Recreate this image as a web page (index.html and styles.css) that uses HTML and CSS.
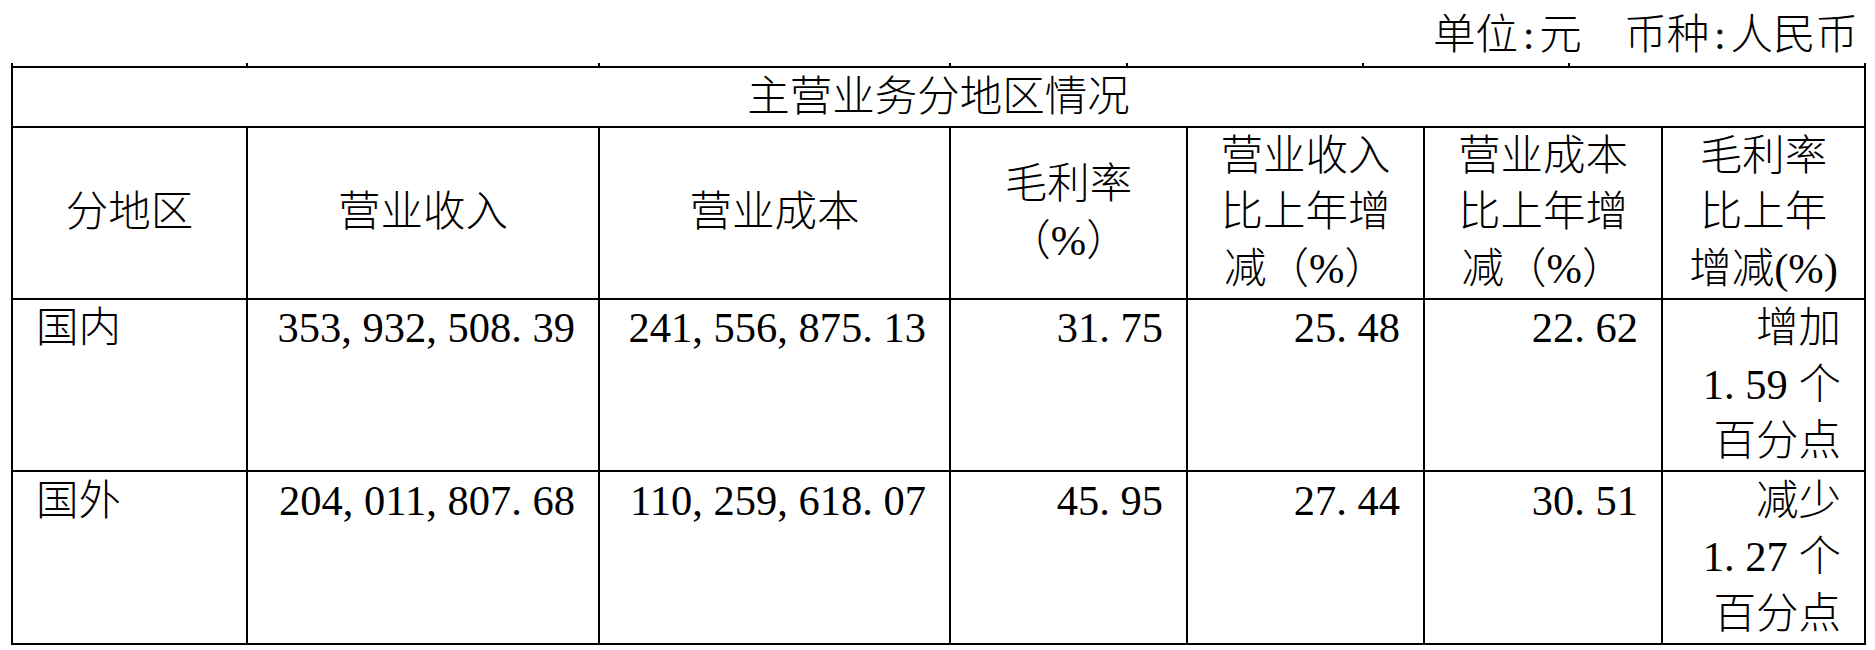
FILE: index.html
```html
<!DOCTYPE html>
<html lang="zh-CN">
<head>
<meta charset="utf-8">
<title>主营业务分地区情况</title>
<link rel="stylesheet" href="styles.css">
</head>
<body>
<div class="unit">单位<span class="colon">:</span>元　币种<span class="colon">:</span>人民币</div>
<div class="ticks">
  <span class="tick w1"></span>
  <span class="tick w2"></span>
  <span class="tick w3"></span>
  <span class="tick w4"></span>
  <span class="tick w5"></span>
  <span class="tick w6"></span>
  <span class="tick w7 last"></span>
</div>
<div class="sheet">
  <div class="cell title">主营业务分地区情况</div>

  <div class="cell head">分地区</div>
  <div class="cell head">营业收入</div>
  <div class="cell head">营业成本</div>
  <div class="cell head">毛利率<br>（%）</div>
  <div class="cell head">营业收入<br>比上年增<br>减（%）</div>
  <div class="cell head">营业成本<br>比上年增<br>减（%）</div>
  <div class="cell head">毛利率<br>比上年<br>增减(%)</div>

  <div class="cell left">国内</div>
  <div class="cell num">353<span class="sep">,</span>932<span class="sep">,</span>508<span class="sep">.</span>39</div>
  <div class="cell num">241<span class="sep">,</span>556<span class="sep">,</span>875<span class="sep">.</span>13</div>
  <div class="cell num">31<span class="sep">.</span>75</div>
  <div class="cell num">25<span class="sep">.</span>48</div>
  <div class="cell num">22<span class="sep">.</span>62</div>
  <div class="cell num">增加<br>1<span class="sep">.</span>59 个<br>百分点</div>

  <div class="cell left">国外</div>
  <div class="cell num">204<span class="sep">,</span>011<span class="sep">,</span>807<span class="sep">.</span>68</div>
  <div class="cell num">110<span class="sep">,</span>259<span class="sep">,</span>618<span class="sep">.</span>07</div>
  <div class="cell num">45<span class="sep">.</span>95</div>
  <div class="cell num">27<span class="sep">.</span>44</div>
  <div class="cell num">30<span class="sep">.</span>51</div>
  <div class="cell num">减少<br>1<span class="sep">.</span>27 个<br>百分点</div>
</div>
</body>
</html>
```

FILE: styles.css
```css
html, body {
  margin: 0;
  padding: 0;
  background: #ffffff;
}

body {
  width: 1875px;
  height: 650px;
  overflow: hidden;
  color: #000000;
  font-family: "Liberation Serif", "Noto Sans CJK SC", serif;
  font-size: 42.5px;
  font-weight: 300;
  line-height: 56.5px;
}

.unit {
  margin-top: 7px;
  height: 56px;
  line-height: 56px;
  padding-right: 17px;
  text-align: right;
  white-space: pre;
}

.colon {
  display: inline-block;
  width: 0.5em;
  text-align: center;
}

.ticks {
  display: flex;
  margin-left: 11px;
  height: 3px;
}

.tick {
  box-sizing: border-box;
  height: 3px;
  border-left: 2px solid #000;
}

.tick.last {
  border-right: 2px solid #000;
}

.w1 { width: 235px; }
.w2 { width: 352px; }
.w3 { width: 351px; }
.w4 { width: 177px; }
.w5 { width: 236px; }
.w6 { width: 206px; }
.w7 { width: 298px; }

.sheet {
  display: grid;
  grid-template-columns: 235px 352px 351px 237px 237px 238px 203px;
  width: 1853px;
  margin-left: 11px;
  border-left: 2px solid #000;
  border-top: 2px solid #000;
}

.cell {
  box-sizing: border-box;
  border-right: 2px solid #000;
  border-bottom: 2px solid #000;
  padding: 0.5px 22px;
  white-space: nowrap;
}

.title {
  grid-column: 1 / -1;
  text-align: center;
}

.head {
  display: flex;
  align-items: center;
  justify-content: center;
  text-align: center;
  height: 172px;
}

.left {
  text-align: left;
  padding-left: 23px;
}

.num {
  text-align: right;
  padding-right: 23px;
}

.sep {
  display: inline-block;
  width: 0.5em;
  text-align: left;
}
```
